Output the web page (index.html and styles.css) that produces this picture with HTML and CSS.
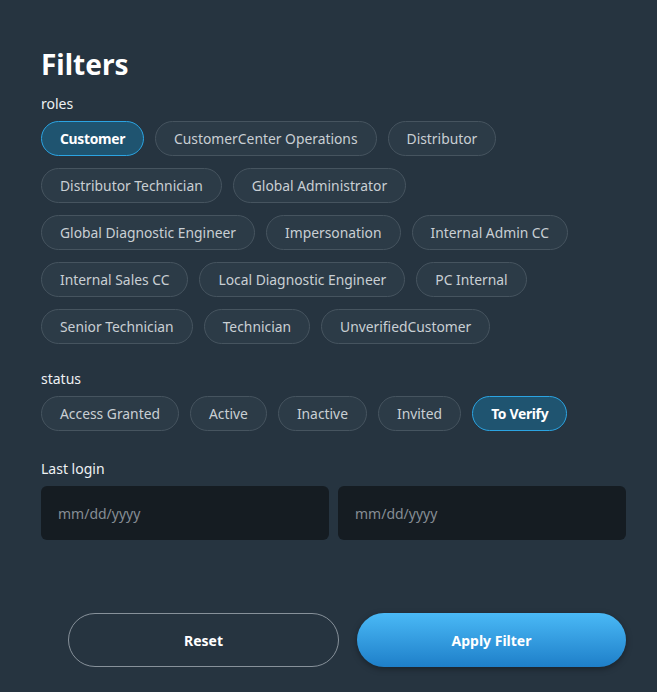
FILE: index.html
```html
<!DOCTYPE html>
<html>
<head>
    <link rel="stylesheet" href="styles.css">
</head>
<body>
    <div class="filters">
        <h1>Filters</h1>

        <div class="group">
            <div class="group-label">roles</div>
            <div class="chips">
                <span class="chip selected">Customer</span>
                <span class="chip">CustomerCenter Operations</span>
                <span class="chip">Distributor</span>
                <span class="chip">Distributor Technician</span>
                <span class="chip">Global Administrator</span>
                <span class="chip">Global Diagnostic Engineer</span>
                <span class="chip">Impersonation</span>
                <span class="chip">Internal Admin CC</span>
                <span class="chip">Internal Sales CC</span>
                <span class="chip">Local Diagnostic Engineer</span>
                <span class="chip">PC Internal</span>
                <span class="chip">Senior Technician</span>
                <span class="chip">Technician</span>
                <span class="chip">UnverifiedCustomer</span>
            </div>
        </div>

        <div class="group">
            <div class="group-label">status</div>
            <div class="chips">
                <span class="chip">Access Granted</span>
                <span class="chip">Active</span>
                <span class="chip">Inactive</span>
                <span class="chip">Invited</span>
                <span class="chip selected">To Verify</span>
            </div>
        </div>

        <div class="group group-dates">
            <div class="group-label">Last login</div>
            <div class="dates">
                <input type="text" class="date-input" placeholder="mm/dd/yyyy">
                <input type="text" class="date-input" placeholder="mm/dd/yyyy">
            </div>
        </div>

        <div class="actions">
            <button class="btn btn-reset">Reset</button>
            <button class="btn btn-apply">Apply Filter</button>
        </div>
    </div>
</body>
</html>
```

FILE: styles.css
```css
body {
    margin: 0;
    padding: 0;
    background-color: #263440;
    font-family: 'Noto Sans', 'Lato', sans-serif;
    color: #fff;
}

.filters {
    padding: 47px 31px 25px 41px;
}

h1 {
    margin: 0 0 13px 0;
    font-size: 28px;
    line-height: 34px;
    font-weight: 700;
    color: #fff;
}

.group {
    margin-bottom: 25px;
}

.group-dates {
    margin-top: 28px;
}

.group-label {
    font-size: 14px;
    line-height: 20px;
    color: #eef1f3;
    margin-bottom: 7px;
}

.chips {
    display: flex;
    flex-wrap: wrap;
    gap: 12px 11px;
}

.chip {
    display: inline-flex;
    align-items: center;
    height: 35px;
    box-sizing: border-box;
    padding: 0 18px;
    border: 1px solid #46545f;
    border-radius: 18px;
    background-color: #2c3b47;
    color: #c9cfd4;
    font-size: 13.85px;
}

.chip.selected {
    background-color: #1f5470;
    border-color: #2ba4e2;
    color: #fff;
    font-weight: 700;
    letter-spacing: -0.3px;
}

.dates {
    display: flex;
    gap: 9px;
}

.date-input {
    flex: 1;
    min-width: 0;
    height: 54px;
    box-sizing: border-box;
    padding: 0 17px;
    border: none;
    border-radius: 6px;
    background-color: #151c22;
    color: #fff;
    font-family: inherit;
    font-size: 14px;
    outline: none;
}

.date-input::placeholder {
    color: #858d94;
}

.actions {
    display: flex;
    gap: 18px;
    margin-top: 73px;
    padding-left: 27px;
}

.btn {
    flex: 1;
    height: 54px;
    border-radius: 27px;
    font-family: inherit;
    font-size: 14px;
    font-weight: 700;
    color: #fff;
    cursor: pointer;
}

.btn-reset {
    background: transparent;
    border: 1px solid #87919a;
}

.btn-apply {
    border: none;
    background: linear-gradient(#4ab9f6, #1e7fc9);
    box-shadow: 0 2px 6px rgba(0, 0, 0, 0.35);
}
```
